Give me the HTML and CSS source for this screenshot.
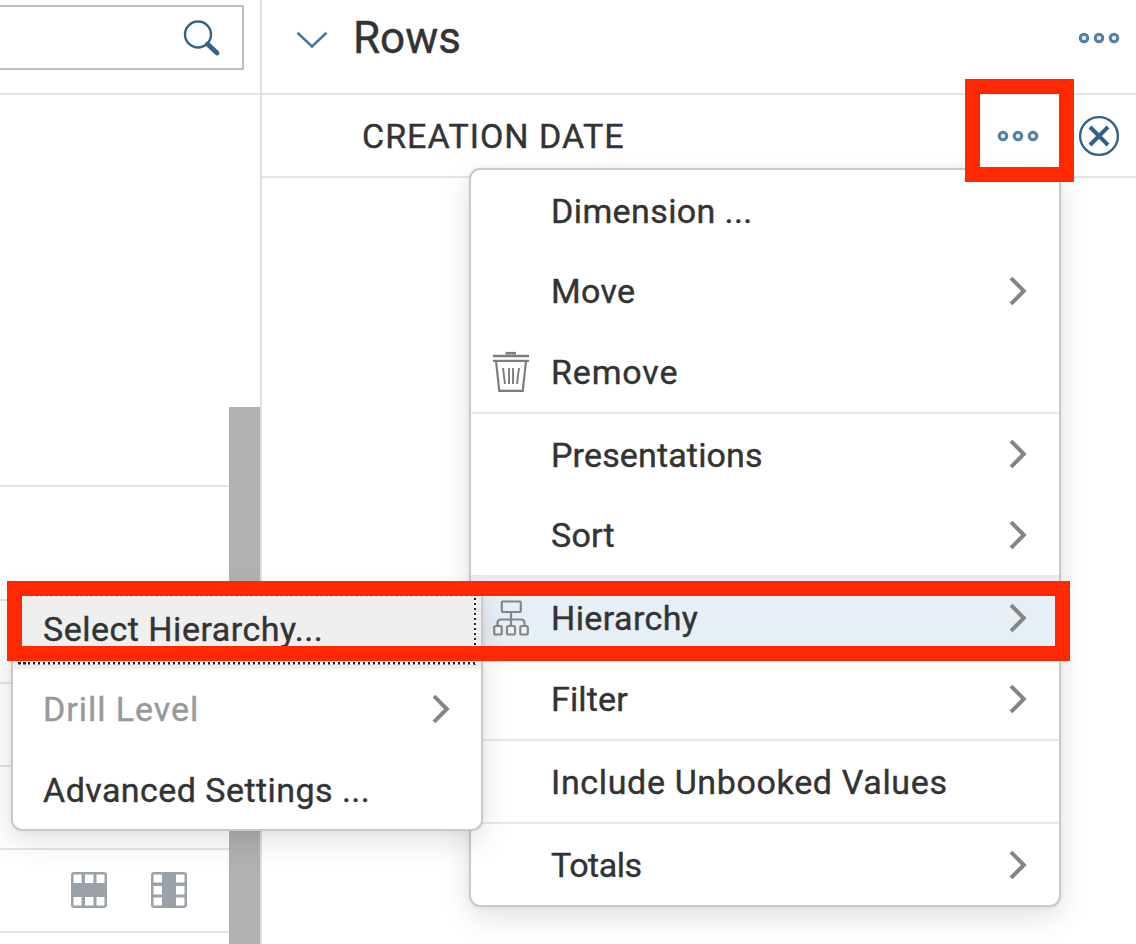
FILE: index.html
```html
<!DOCTYPE html>
<html lang="en">
<head>
<meta charset="utf-8">
<title>Rows – Hierarchy</title>
<link rel="stylesheet" href="styles.css">
</head>
<body>
<svg class="defs" width="0" height="0">
  <symbol id="dots" viewBox="0 0 42 12"><g fill="#dfe9f0" stroke="#5680a3" stroke-width="3"><circle cx="6" cy="6" r="3.8"/><circle cx="21" cy="6" r="3.8"/><circle cx="36" cy="6" r="3.8"/></g></symbol>
  <symbol id="arrow" viewBox="0 0 18 30"><path d="M2 2.2L14.8 15L2 27.8" fill="none" stroke="#858585" stroke-width="4"/></symbol>
</svg>
<div class="app">
  <aside class="side">
    <div class="search-bar">
      <div class="search">
        <svg width="38" height="38" viewBox="0 0 38 38" fill="none" stroke="#346187"><circle cx="15" cy="15.5" r="13" stroke-width="2.4"/><path d="M24.5 25L34 34" stroke-width="4.8" stroke-linecap="round"/></svg>
      </div>
    </div>
    <div class="side-body">
      <div class="list">
        <div class="list-head"></div>
        <div class="list-top"></div>
        <div class="list-row"></div>
        <div class="list-row"></div>
        <div class="list-row"></div>
        <div class="list-row icons">
          <svg width="36" height="36" viewBox="0 0 36 36"><rect width="36" height="36" rx="3" fill="#9aa1a9"/><g fill="#fff"><rect x="2.5" y="2.5" width="8" height="8.5"/><rect x="14" y="2.5" width="8.5" height="8.5"/><rect x="25.5" y="2.5" width="8" height="8.5"/><rect x="2.5" y="25" width="8" height="8.5"/><rect x="14" y="25" width="8.5" height="8.5"/><rect x="25.5" y="25" width="8" height="8.5"/></g></svg>
          <svg width="36" height="36" viewBox="0 0 36 36"><rect width="36" height="36" rx="3" fill="#9aa1a9"/><g fill="#fff"><rect x="2.5" y="2.5" width="8.5" height="8"/><rect x="2.5" y="14" width="8.5" height="8.5"/><rect x="2.5" y="25.5" width="8.5" height="8"/><rect x="25" y="2.5" width="8.5" height="8"/><rect x="25" y="14" width="8.5" height="8.5"/><rect x="25" y="25.5" width="8.5" height="8"/></g></svg>
        </div>
      </div>
      <div class="scroll"><div class="thumb"></div></div>
    </div>
  </aside>
  <main class="panel">
    <header class="panel-head">
      <svg class="chev" width="32" height="18" viewBox="0 0 32 18"><path d="M1.5 1.8L16 15.5L30.5 1.8" fill="none" stroke="#4c779c" stroke-width="2.6"/></svg>
      <h1 class="title">Rows</h1>
      <svg class="more" width="42" height="12"><use href="#dots"/></svg>
    </header>
    <div class="field">
      <span class="field-name">CREATION DATE</span>
      <svg class="more" width="42" height="12"><use href="#dots"/></svg>
      <svg class="close" width="42" height="42" viewBox="0 0 42 42" fill="none" stroke="#346187"><circle cx="21" cy="21" r="18.9" stroke-width="2.4"/><path d="M12 12L30 30M30 12L12 30" stroke-width="4"/></svg>
    </div>
  </main>
</div>

<div class="menu main-menu">
  <div class="group g3">
    <div class="item"><span class="ico"></span><span class="label t-dimension">Dimension ...</span></div>
    <div class="item"><span class="ico"></span><span class="label t-move">Move</span><svg class="arrow" width="18" height="30"><use href="#arrow"/></svg></div>
    <div class="item"><span class="ico"><svg width="36" height="42" viewBox="0 0 36 42" fill="none" stroke="#7d7d7d"><path d="M12.5 2.2H23" stroke-width="2.6"/><path d="M0 5H36" stroke-width="2.4"/><path d="M0 9.8H36" stroke-width="2.2"/><path d="M3 10L6.3 39.8H29.7L33 10" stroke-width="2.2"/><path d="M10 17L12 33M26 17L24 33M16 17V33M20 17V33" stroke-width="1.9"/></svg></span><span class="label t-remove">Remove</span></div>
  </div>
  <div class="group g2">
    <div class="item"><span class="ico"></span><span class="label t-pres">Presentations</span><svg class="arrow" width="18" height="30"><use href="#arrow"/></svg></div>
    <div class="item"><span class="ico"></span><span class="label t-sort">Sort</span><svg class="arrow" width="18" height="30"><use href="#arrow"/></svg></div>
  </div>
  <div class="group g2b">
    <div class="item active"><span class="ico"><svg width="36" height="38" viewBox="0 0 36 38" fill="none" stroke="#848688" stroke-width="2.2"><rect x="8.8" y="2.5" width="19" height="10.5" rx="1"/><path d="M18 13V26M4.5 27V24Q4.5 20.5 8 20.5H28Q31.5 20.5 31.5 24V27"/><g fill="#f0f4f8"><rect x="1.2" y="27" width="7.5" height="8.5" rx="1.5"/><rect x="14" y="27" width="8" height="8.5" rx="1.5"/><rect x="27.3" y="27" width="7.5" height="8.5" rx="1.5"/></g></svg></span><span class="label t-hier">Hierarchy</span><svg class="arrow" width="18" height="30"><use href="#arrow"/></svg></div>
    <div class="item"><span class="ico"></span><span class="label t-filter">Filter</span><svg class="arrow" width="18" height="30"><use href="#arrow"/></svg></div>
  </div>
  <div class="group g1">
    <div class="item"><span class="ico"></span><span class="label t-include">Include Unbooked Values</span></div>
  </div>
  <div class="group g1">
    <div class="item"><span class="ico"></span><span class="label t-totals">Totals</span><svg class="arrow" width="18" height="30"><use href="#arrow"/></svg></div>
  </div>
</div>

<div class="menu sub-menu">
  <div class="item focused"><span class="label t-select">Select Hierarchy...</span></div>
  <div class="item disabled"><span class="label t-drill">Drill Level</span><svg class="arrow" width="18" height="30"><use href="#arrow"/></svg></div>
  <div class="item"><span class="label t-adv">Advanced Settings ...</span></div>
</div>

<div class="mark mark-more"></div>
<div class="mark mark-path"></div>
</body>
</html>
```

FILE: styles.css
```css
* { box-sizing: border-box; }
body { margin: 0; background: #fff; color: #333; font-family: Roboto, "Liberation Sans", sans-serif; font-size: 34px; overflow: hidden; -webkit-text-stroke: 0.4px currentColor; }
svg { display: block; flex: none; }
.defs { position: absolute; }
.app { display: flex; width: 1136px; height: 944px; overflow: hidden; }

.side { width: 262px; border-right: 2px solid #dedede; display: flex; flex-direction: column; flex: none; }
.search-bar { height: 95px; border-bottom: 2px solid #e5e5e5; padding-top: 5px; flex: none; }
.search { width: 244px; height: 65px; border: 2px solid #bfbfbf; border-left: 0; display: flex; justify-content: flex-end; padding: 12px 21px 0 0; }
.side-body { flex: 1; display: flex; min-height: 0; }
.list { flex: 1; }
.list-head { height: 392px; border-bottom: 2px solid #e5e5e5; }
.list-top { height: 114px; border-bottom: 2px solid #e5e5e5; }
.list-row { height: 83px; border-bottom: 2px solid #e5e5e5; }
.list-row:last-child { height: 82.5px; }
.icons { display: flex; gap: 44.5px; padding: 22px 0 0 70.5px; }
.scroll { width: 31px; padding-top: 312px; }
.thumb { height: 600px; background: #b1b1b1; }

.panel { flex: 1; }
.panel-head { height: 95px; border-bottom: 2px solid #e5e5e5; display: flex; align-items: center; padding: 0 16px 17px 34px; }
.chev { margin-top: 3px; }
.title { margin: 0 auto 0 25px; font-size: 44px; line-height: 50px; font-weight: 400; }
.field { height: 83px; border-bottom: 2px solid #e5e5e5; display: flex; align-items: center; padding: 0 16px 0 100px; }
.field-name { margin-right: auto; letter-spacing: 1px; }
.close { margin-left: 39px; }

.menu { position: absolute; background: #fff; border: 2px solid #c9c9c9; border-radius: 11px; box-shadow: 0 10px 30px rgba(0,0,0,.12), 0 0 5px rgba(0,0,0,.06); white-space: nowrap; }
.main-menu { left: 469px; top: 168px; width: 592px; height: 739px; }
.sub-menu { left: 11px; top: 586px; width: 472px; height: 245px; }
.group { display: grid; grid-auto-rows: 1fr; border-bottom: 2px solid #e8e8e8; }
.group:last-child { border-bottom: 0; }
.g3 { height: 244px; }
.g2 { height: 163px; }
.g2b { height: 164px; }
.g1 { height: 83px; }
.g1:last-child { height: 81px; }
.item { display: flex; align-items: center; }
.main-menu .item { padding: 0 32px 0 22px; }
.ico { width: 58px; flex: none; }
.label { line-height: 40px; padding-top: 1px; }
.arrow { margin-left: auto; }
.active { background: #e6eef6; }
.sub-menu .item { height: 80.5px; padding: 0 31px 0 30px; position: relative; }
.sub-menu .focused { background: #efefef; border-radius: 9px 9px 0 0; }
.focused::after {
  content: ""; position: absolute; left: 5px; top: 5px; right: 5px; bottom: 4px;
  background:
    repeating-linear-gradient(90deg, #222 0 2.5px, #fff 2.5px 5px) left bottom / 100% 2.5px no-repeat,
    repeating-linear-gradient(180deg, #222 0 2.5px, #fff 2.5px 5px) right top / 2.5px 100% no-repeat,
    repeating-linear-gradient(90deg, #fff 0 2.5px, #ddd 2.5px 5px) left top / 100% 4px no-repeat,
    repeating-linear-gradient(180deg, #fff 0 2.5px, #ddd 2.5px 5px) left top / 4px 100% no-repeat;
}
.disabled { color: #999; }

.t-dimension { letter-spacing: .4px; }
.t-move { letter-spacing: .3px; }
.t-remove { letter-spacing: .85px; }
.t-pres { letter-spacing: .15px; }
.t-sort { letter-spacing: .2px; }
.t-hier { letter-spacing: .4px; }
.t-filter { letter-spacing: .15px; }
.t-include { letter-spacing: .65px; }
.t-totals { letter-spacing: -.5px; }
.t-select { letter-spacing: .5px; }
.t-drill { letter-spacing: .95px; }
.t-adv { letter-spacing: .45px; }

.mark { position: absolute; border: 15px solid #ff2800; }
.mark-more { left: 964.5px; top: 79px; width: 109px; height: 103px; }
.mark-path { left: 7px; top: 580.5px; width: 1063px; height: 80px; }
```
